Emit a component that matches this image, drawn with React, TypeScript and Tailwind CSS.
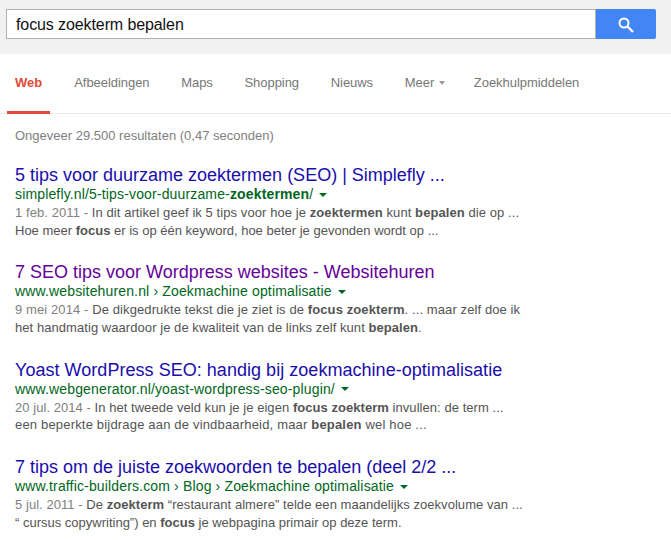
import React from "react"

const Arrow = ({ className = "" }: { className?: string }) => (
  <span className={"inline-block w-0 h-0 border-x-[4px] border-x-transparent border-t-[4px] " + className}></span>
)

const results = [
  {
    title: "5 tips voor duurzame zoektermen (SEO) | Simplefly ...",
    color: "text-[#1a0dab]",
    titleTrack: "tracking-[0px]",
    url: (
      <>
        simplefly.nl/5-tips-voor-duurzame-<b>zoektermen</b>/
      </>
    ),
    date: "1 feb. 2011",
    track1: "tracking-[0.08px]",
    track2: "tracking-[0px]",
    line1: (
      <>
        In dit artikel geef ik 5 tips voor hoe je <b>zoektermen</b> kunt <b>bepalen</b> die op ...
      </>
    ),
    line2: (
      <>
        Hoe meer <b>focus</b> er is op één keyword, hoe beter je gevonden wordt op ...
      </>
    )
  },
  {
    title: "7 SEO tips voor Wordpress websites - Websitehuren",
    color: "text-[#609]",
    titleTrack: "tracking-[0px]",
    url: <>www.websitehuren.nl › Zoekmachine optimalisatie</>,
    date: "9 mei 2014",
    track1: "tracking-[0.1px]",
    track2: "tracking-[0.06px]",
    line1: (
      <>
        De dikgedrukte tekst die je ziet is de <b>focus zoekterm</b>. ... maar zelf doe ik
      </>
    ),
    line2: (
      <>
        het handmatig waardoor je de kwaliteit van de links zelf kunt <b>bepalen</b>.
      </>
    )
  },
  {
    title: "Yoast WordPress SEO: handig bij zoekmachine-optimalisatie",
    color: "text-[#1a0dab]",
    titleTrack: "tracking-[0.035px]",
    url: <>www.webgenerator.nl/yoast-wordpress-seo-plugin/</>,
    date: "20 jul. 2014",
    track1: "tracking-[0.05px]",
    track2: "tracking-[0.18px]",
    line1: (
      <>
        In het tweede veld kun je je eigen <b>focus zoekterm</b> invullen: de term ...
      </>
    ),
    line2: (
      <>
        een beperkte bijdrage aan de vindbaarheid, maar <b>bepalen</b> wel hoe ...
      </>
    )
  },
  {
    title: "7 tips om de juiste zoekwoorden te bepalen (deel 2/2 ...",
    color: "text-[#1a0dab]",
    titleTrack: "tracking-[0px]",
    url: <>www.traffic-builders.com › Blog › Zoekmachine optimalisatie</>,
    date: "5 jul. 2011",
    track1: "tracking-[0.05px]",
    track2: "tracking-[0px]",
    line1: (
      <>
        De <b>zoekterm</b> “restaurant almere” telde een maandelijks zoekvolume van ...
      </>
    ),
    line2: (
      <>
        “ cursus copywriting”) en <b>focus</b> je webpagina primair op deze term.
      </>
    )
  }
]

const tabs = ["Afbeeldingen", "Maps", "Shopping", "Nieuws"]

export default function App() {
  return (
    <div className="w-[671px] h-[540px] overflow-hidden bg-white font-['Liberation_Sans',Arial,sans-serif]">
      <div className="h-[54px] bg-[#f1f1f1] pt-[9px] pl-[6px] pr-[15px]">
        <div className="flex h-[30px]">
          <div className="flex-1 flex items-center pl-[9px] pt-[1px] bg-white border border-[#b0b0b0] text-[16px] tracking-[-0.1px] text-[#111]">
            focus zoekterm bepalen
          </div>
          <div className="w-[60px] bg-[#4285f4] rounded-r-[2px] flex items-center justify-center">
            <svg width="16" height="16" viewBox="0 0 16 16" fill="none" stroke="white" className="mt-[1px]">
              <circle cx="6" cy="6" r="4.5" strokeWidth="2" />
              <path d="M9.5 9.5L15 15" strokeWidth="2.4" />
            </svg>
          </div>
        </div>
      </div>

      <div className="h-[60px] border-b border-[#ebebeb] flex pl-[15px] text-[13px] text-[#777]">
        <div className="relative flex items-center h-[57px] font-bold text-[#dd4b39]">
          Web
          <div className="absolute left-[-8px] right-[-8px] bottom-[-3px] h-[3px] bg-[#dd4b39]"></div>
        </div>
        <div className="flex items-center h-[57px] ml-[32px] gap-[31.7px] tracking-[-0.05px]">
          {tabs.map((t) => (
            <span key={t}>{t}</span>
          ))}
          <span className="flex items-center gap-[5px] -mr-[3px]">
            Meer <span className="inline-block w-0 h-0 border-x-[3.5px] border-x-transparent border-t-[4px] border-t-[#999]"></span>
          </span>
          <span>Zoekhulpmiddelen</span>
        </div>
      </div>

      <div className="pl-[15px] pt-[14px] text-[13px] leading-[16px] text-[#808080]">
        Ongeveer 29.500 resultaten (0,47 seconden)
      </div>

      <div className="pl-[15px] pt-[21px] flex flex-col gap-[23.2px]">
        {results.map((r) => (
          <div key={r.date} className="whitespace-nowrap">
            <div className={"text-[18px] leading-[21px] " + r.color + " " + r.titleTrack}>{r.title}</div>
            <div className="text-[14px] leading-[17px] tracking-[0.15px] text-[#006621] flex items-center">
              <span>{r.url}</span>
              <Arrow className="ml-[6px] border-t-[#006621]" />
            </div>
            <div className="text-[13px] leading-[17.6px] text-[#545454] mt-[1px] [&_b]:font-bold">
              <div className={r.track1}>
                <span className="text-[#808080]">{r.date} - </span>
                {r.line1}
              </div>
              <div className={r.track2}>{r.line2}</div>
            </div>
          </div>
        ))}
      </div>
    </div>
  )
}
